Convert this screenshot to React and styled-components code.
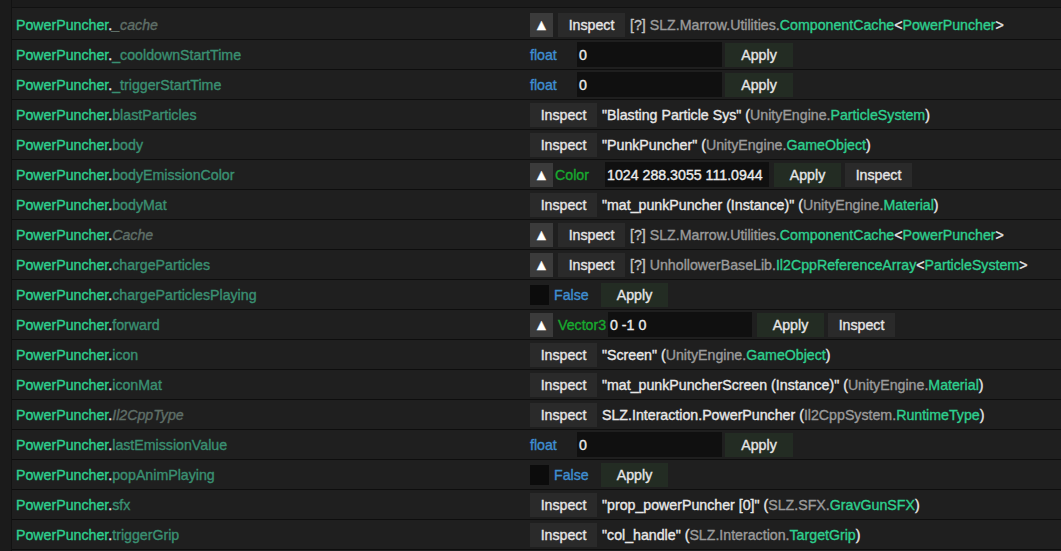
import React from "react";
import styled, { createGlobalStyle } from "styled-components";

const GlobalStyle = createGlobalStyle`
  html, body {
    margin: 0;
    padding: 0;
    background: #1b1b1b;
  }
  body {
    font-family: "Liberation Sans", Arial, sans-serif;
    font-size: 14.2px;
    -webkit-text-stroke: 0.35px currentColor;
  }
`;

const rows = [
  { name: "_cache", italic: true, kind: "ref", arrow: true, value: [["q", "[?] "], ["ns", "SLZ.Marrow.Utilities."], ["cls", "ComponentCache"], ["w", "<"], ["cls", "PowerPuncher"], ["w", ">"]] },
  { name: "_cooldownStartTime", kind: "float", text: "0" },
  { name: "_triggerStartTime", kind: "float", text: "0" },
  { name: "blastParticles", kind: "ref", value: [["w", "\"Blasting Particle Sys\" ("], ["ns", "UnityEngine."], ["cls", "ParticleSystem"], ["w", ")"]] },
  { name: "body", kind: "ref", value: [["w", "\"PunkPuncher\" ("], ["ns", "UnityEngine."], ["cls", "GameObject"], ["w", ")"]] },
  { name: "bodyEmissionColor", kind: "struct", label: "Color", text: "1024 288.3055 111.0944", input: 164, shift: -2 },
  { name: "bodyMat", kind: "ref", value: [["w", "\"mat_punkPuncher (Instance)\" ("], ["ns", "UnityEngine."], ["cls", "Material"], ["w", ")"]] },
  { name: "Cache", italic: true, kind: "ref", arrow: true, value: [["q", "[?] "], ["ns", "SLZ.Marrow.Utilities."], ["cls", "ComponentCache"], ["w", "<"], ["cls", "PowerPuncher"], ["w", ">"]] },
  { name: "chargeParticles", kind: "ref", arrow: true, value: [["q", "[?] "], ["ns", "UnhollowerBaseLib."], ["cls", "Il2CppReferenceArray"], ["w", "<"], ["cls", "ParticleSystem"], ["w", ">"]] },
  { name: "chargeParticlesPlaying", kind: "bool" },
  { name: "forward", kind: "struct", label: "Vector3", text: "0 -1 0", input: 144, shift: 1 },
  { name: "icon", kind: "ref", value: [["w", "\"Screen\" ("], ["ns", "UnityEngine."], ["cls", "GameObject"], ["w", ")"]] },
  { name: "iconMat", kind: "ref", value: [["w", "\"mat_punkPuncherScreen (Instance)\" ("], ["ns", "UnityEngine."], ["cls", "Material"], ["w", ")"]] },
  { name: "Il2CppType", italic: true, kind: "ref", value: [["w", "SLZ.Interaction.PowerPuncher ("], ["ns", "Il2CppSystem."], ["cls", "RuntimeType"], ["w", ")"]] },
  { name: "lastEmissionValue", kind: "float", text: "0" },
  { name: "popAnimPlaying", kind: "bool" },
  { name: "sfx", kind: "ref", value: [["w", "\"prop_powerPuncher [0]\" ("], ["ns", "SLZ.SFX."], ["cls", "GravGunSFX"], ["w", ")"]] },
  { name: "triggerGrip", kind: "ref", value: [["w", "\"col_handle\" ("], ["ns", "SLZ.Interaction."], ["cls", "TargetGrip"], ["w", ")"]] },
];

const Frame = styled.div`
  display: flex;
  width: 1061px;
  height: 551px;
  overflow: hidden;
`;

const SideStrip = styled.div`
  width: 11px;
  flex-shrink: 0;
  background: #1b1b1b;
  border-right: 1px solid #121212;
`;

const Main = styled.div`
  flex: 1;
  display: flex;
  flex-direction: column;
  background: #1f1f1f;
`;

const TopBar = styled.div`
  height: 7px;
  background: #1b1b1b;
  border-bottom: 1px solid #111111;
  margin-bottom: 2px;
`;

const Row = styled.div`
  display: grid;
  grid-template-columns: 518px 1fr;
  align-items: center;
  height: 29px;
  border-bottom: 1px solid #0e0e0e;
  white-space: nowrap;
`;

const NameCell = styled.div`
  padding-left: 4px;
  padding-top: 1px;
`;

const ClassName = styled.span`
  color: #2ed08f;
`;

const Member = styled.span`
  color: ${(p) => (p.$italic ? "#5f6f68" : "#3a9072")};
  font-style: ${(p) => (p.$italic ? "italic" : "normal")};
`;

const ValueCell = styled.div`
  display: flex;
  align-items: center;
  gap: 4px;
`;

const Button = styled.div`
  width: ${(p) => p.$w || 67}px;
  height: 24px;
  margin-left: ${(p) => p.$ml || 0}px;
  display: flex;
  align-items: center;
  justify-content: center;
  color: #e6e6e6;
  background: ${(p) => (p.$green ? "#232c23" : "#2a2a2a")};
  flex-shrink: 0;
`;

const ArrowButton = styled.div`
  width: 23px;
  height: 24px;
  display: flex;
  align-items: center;
  justify-content: center;
  background: #3b3b3b;
  color: #ffffff;
  font-size: 15px;
  flex-shrink: 0;
`;

const Rich = styled.span`
  margin-left: 1px;
  padding-top: 1px;
`;

const Seg = styled.span`
  color: ${(p) =>
    p.$k === "ns" ? "#9b9b9b" : p.$k === "cls" ? "#2ed08f" : p.$k === "q" ? "#c4c4c4" : "#e8e8e8"};
`;

const Keyword = styled.span`
  color: #3f8fd2;
  width: 43px;
  margin-left: ${(p) => p.$ml || 0}px;
  flex-shrink: 0;
`;

const StructLabel = styled.span`
  color: #18aa2f;
  width: 46px;
  margin-left: ${(p) => p.$ml}px;
  flex-shrink: 0;
`;

const Input = styled.div`
  width: ${(p) => p.$w}px;
  height: 25px;
  display: flex;
  align-items: center;
  padding-left: 2px;
  box-sizing: border-box;
  background: #101010;
  color: #ececec;
  flex-shrink: 0;
`;

const Check = styled.div`
  width: 19px;
  height: 20px;
  background: #0c0c0c;
  flex-shrink: 0;
`;

const renderValue = (r) => {
  if (r.kind === "ref") {
    return (
      <ValueCell>
        {r.arrow && <ArrowButton>▲</ArrowButton>}
        <Button $ml={r.arrow ? 1 : 0}>Inspect</Button>
        <Rich>
          {r.value.map(([k, t], i) => (
            <Seg key={i} $k={k}>{t}</Seg>
          ))}
        </Rich>
      </ValueCell>
    );
  }
  if (r.kind === "float") {
    return (
      <ValueCell>
        <Keyword>float</Keyword>
        <Input $w={145}>{r.text}</Input>
        <Button $green $w={68} $ml={-1}>Apply</Button>
      </ValueCell>
    );
  }
  if (r.kind === "bool") {
    return (
      <ValueCell>
        <Check />
        <Keyword $ml={1}>False</Keyword>
        <Button $green>Apply</Button>
      </ValueCell>
    );
  }
  return (
    <ValueCell>
      <ArrowButton>▲</ArrowButton>
      <StructLabel $ml={r.shift}>{r.label}</StructLabel>
      <Input $w={r.input}>{r.text}</Input>
      <Button $green $ml={1}>Apply</Button>
      <Button>Inspect</Button>
    </ValueCell>
  );
};

const App = () => {
  return (
    <>
      <GlobalStyle />
      <Frame>
        <SideStrip />
        <Main>
          <TopBar />
          {rows.map((r) => (
            <Row key={r.name}>
              <NameCell>
                <ClassName>PowerPuncher</ClassName>
                <Seg $k="w">.</Seg>
                <Member $italic={r.italic}>{r.name}</Member>
              </NameCell>
              {renderValue(r)}
            </Row>
          ))}
        </Main>
      </Frame>
    </>
  );
};

export default App;
